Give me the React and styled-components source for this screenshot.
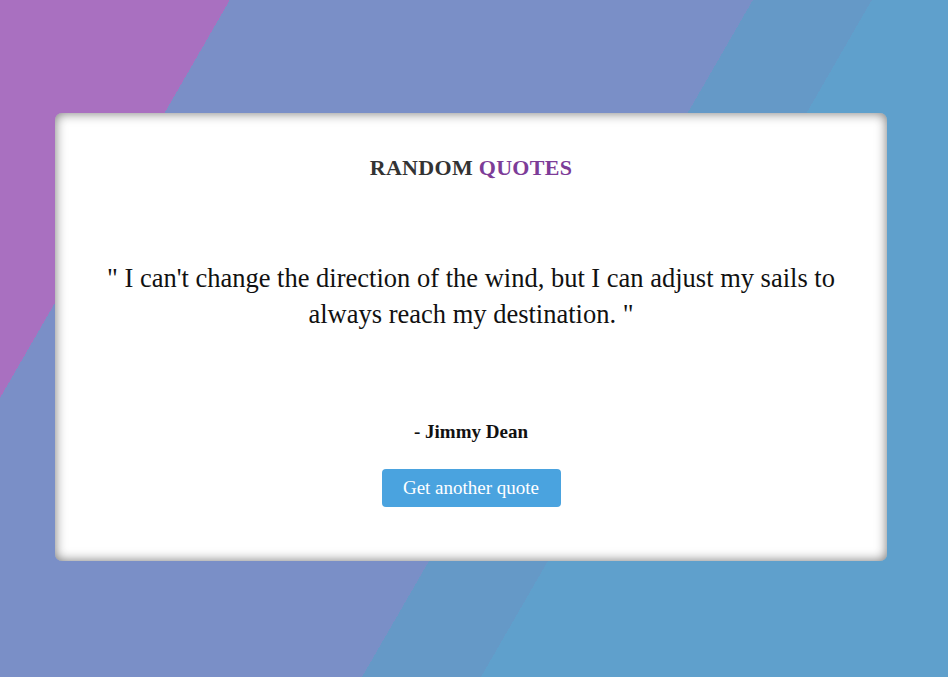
import styled, { createGlobalStyle } from "styled-components";

const GlobalStyle = createGlobalStyle`
  html, body {
    margin: 0;
    padding: 0;
  }
  body {
    font-family: "Liberation Serif", "DejaVu Serif", serif;
  }
`;

const quote = {
  text: "I can't change the direction of the wind, but I can adjust my sails to always reach my destination.",
  author: "Jimmy Dean",
};

export default function App() {
  return (
    <Page>
      <GlobalStyle />
      <Card>
        <Title>
          RANDOM <span>QUOTES</span>
        </Title>
        <QuoteText>" {quote.text} "</QuoteText>
        <Author>- {quote.author}</Author>
        <NewQuoteBtn type="button">Get another quote</NewQuoteBtn>
      </Card>
    </Page>
  );
}

const Page = styled.div`
  min-height: 100vh;
  box-sizing: border-box;
  padding: 113px 61px 0 55px;
  background: linear-gradient(
    120deg,
    #a970c0 199px,
    #7a8fc7 199px,
    #7a8fc7 652px,
    #6599c7 652px,
    #6599c7 755px,
    #5fa0cc 755px
  );
`;

const Card = styled.div`
  height: 448px;
  box-sizing: border-box;
  background: #ffffff;
  border-radius: 7px;
  box-shadow: inset 0 0 12px rgba(0, 0, 0, 0.55);
  padding: 43px 40px 0;
  display: flex;
  flex-direction: column;
  align-items: center;
  text-align: center;
`;

const Title = styled.h1`
  margin: 0;
  font-size: 22px;
  line-height: 24px;
  font-weight: 700;
  color: #333333;
  letter-spacing: 0.3px;

  span {
    color: #7d3c98;
  }
`;

const QuoteText = styled.p`
  margin: 80px 0 0;
  max-width: 752px;
  font-size: 26.5px;
  line-height: 36px;
  color: #111111;
`;

const Author = styled.p`
  margin: 89px 0 0;
  font-size: 19px;
  line-height: 22px;
  font-weight: 700;
  color: #111111;
`;

const NewQuoteBtn = styled.button`
  margin-top: 26px;
  width: 179px;
  height: 38px;
  border: none;
  border-radius: 4px;
  background: #4aa3df;
  color: #ffffff;
  font-family: inherit;
  font-size: 19px;
  cursor: pointer;
`;
